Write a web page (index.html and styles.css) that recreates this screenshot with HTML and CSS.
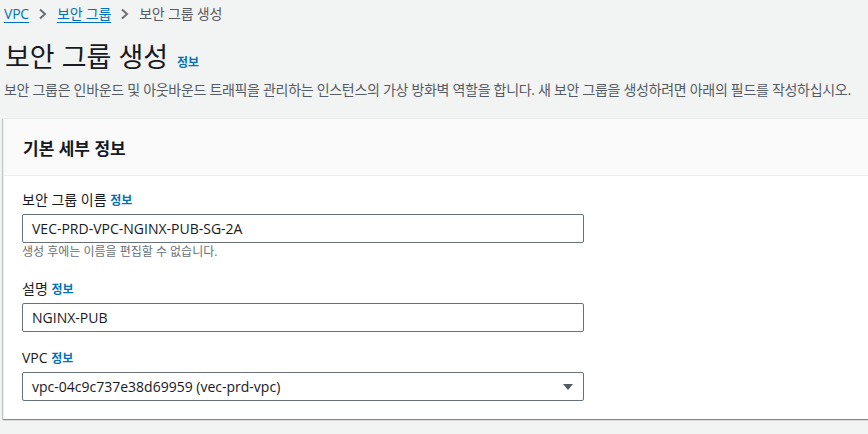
FILE: index.html
```html
<!DOCTYPE html>
<html lang="ko">
<head>
<meta charset="utf-8">
<link rel="stylesheet" href="styles.css">
</head>
<body>
<div class="page">
  <nav class="crumbs">
    <a class="crumb-link">VPC</a>
    <svg class="chev" width="10" height="12" viewBox="0 0 10 12"><path d="M2 1.5 L7 6 L2 10.5" fill="none" stroke="#687078" stroke-width="2"/></svg>
    <a class="crumb-link">보안 그룹</a>
    <svg class="chev" width="10" height="12" viewBox="0 0 10 12"><path d="M2 1.5 L7 6 L2 10.5" fill="none" stroke="#687078" stroke-width="2"/></svg>
    <span class="crumb-current">보안 그룹 생성</span>
  </nav>
  <div class="title-row">
    <h1 class="title">보안 그룹 생성</h1>
    <span class="info">정보</span>
  </div>
  <p class="desc">보안 그룹은 인바운드 및 아웃바운드 트래픽을 관리하는 인스턴스의 가상 방화벽 역할을 합니다. 새 보안 그룹을 생성하려면 아래의 필드를 작성하십시오.</p>
  <section class="card">
    <header class="card-head">기본 세부 정보</header>
    <div class="card-body">
      <div class="field">
        <div class="label">보안 그룹 이름 <span class="info-sm">정보</span></div>
        <div class="input">VEC-PRD-VPC-NGINX-PUB-SG-2A</div>
        <div class="hint">생성 후에는 이름을 편집할 수 없습니다.</div>
      </div>
      <div class="field">
        <div class="label">설명 <span class="info-sm">정보</span></div>
        <div class="input">NGINX-PUB</div>
      </div>
      <div class="field">
        <div class="label">VPC <span class="info-sm">정보</span></div>
        <div class="input select">
          <span>vpc-04c9c737e38d69959 (vec-prd-vpc)</span>
          <svg width="12" height="10" viewBox="0 0 12 10"><path d="M1 2 L11 2 L6 8 Z" fill="#545b64"/></svg>
        </div>
      </div>
    </div>
  </section>
</div>
</body>
</html>
```
FILE: styles.css
```css
html, body {
  margin: 0;
  padding: 0;
  background: #f2f3f3;
}
body {
  font-family: "Open Sans", "Noto Sans CJK KR", sans-serif;
  color: #16191f;
  width: 868px;
  height: 434px;
  overflow: hidden;
}
.page {
  padding: 4px 0 0 3px;
}
.crumbs {
  display: flex;
  align-items: center;
  gap: 9px;
  font-size: 14px;
  line-height: 20px;
  padding-left: 1px;
  letter-spacing: -0.2px;
}
.crumb-link {
  color: #0073bb;
  text-decoration: underline;
  text-underline-offset: 3px;
}
.crumb-current {
  color: #545b64;
}
.chev {
  display: block;
}
.title-row {
  display: flex;
  align-items: baseline;
  gap: 9px;
  margin-top: 15px;
  padding-left: 2px;
}
.title {
  margin: 0;
  font-size: 27px;
  font-weight: 400;
  line-height: 36px;
}
.info {
  color: #0073bb;
  font-size: 12px;
  font-weight: 600;
}
.desc {
  margin: 5px 0 0 0;
  padding-left: 1px;
  font-size: 14px;
  line-height: 20px;
  color: #545b64;
  white-space: nowrap;
  letter-spacing: -0.3px;
}
.card {
  margin-top: 18px;
  width: 900px;
  background: #fff;
  border-left: 1px solid #eaeded;
  border-top: 1px solid #eaeded;
  box-shadow: 0 1px 1px 0 rgba(0,28,36,.3), 1px 1px 1px 0 rgba(0,28,36,.15), -1px 1px 1px 0 rgba(0,28,36,.15);
}
.card-head {
  background: #fafafa;
  border-bottom: 1px solid #eaeded;
  padding: 0 19px;
  box-sizing: border-box;
  height: 57px;
  display: flex;
  align-items: center;
  font-size: 17px;
  font-weight: 600;
}
.card-body {
  padding: 14px 19px 18px 18px;
  display: flex;
  flex-direction: column;
  gap: 16px;
}
.label {
  font-size: 14px;
  line-height: 20px;
  margin-bottom: 3px;
}
.info-sm {
  color: #0073bb;
  font-size: 12px;
  font-weight: 600;
}
.input {
  width: 562px;
  height: 29px;
  box-sizing: border-box;
  border: 1px solid #687078;
  border-radius: 2px;
  padding: 0 9px;
  font-size: 14px;
  display: flex;
  align-items: center;
  background: #fff;
}
.select {
  justify-content: space-between;
}
.hint {
  margin-top: 1px;
  margin-bottom: 3px;
  font-size: 12px;
  line-height: 16px;
  color: #687078;
}
```
